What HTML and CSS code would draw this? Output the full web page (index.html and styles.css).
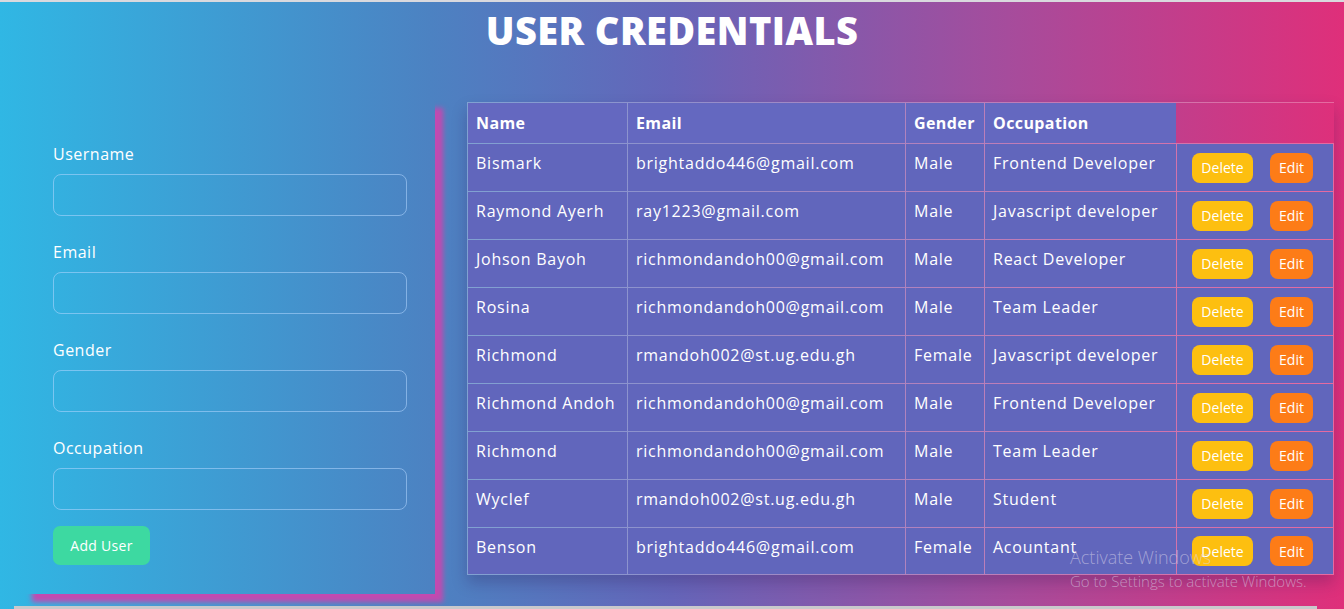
FILE: index.html
```html
<!DOCTYPE html>
<html lang="en">
<head>
  <meta charset="UTF-8">
  <meta name="viewport" content="width=device-width, initial-scale=1.0">
  <title>User Credentials</title>
  <link rel="stylesheet" href="styles.css">
</head>
<body>
  <div class="page">
    <h1 class="title">USER CREDENTIALS</h1>

    <div class="content">
      <!-- add user form -->
      <form class="user-form">
        <div class="form-group">
          <label>Username</label>
          <input type="text">
        </div>
        <div class="form-group">
          <label>Email</label>
          <input type="text">
        </div>
        <div class="form-group">
          <label>Gender</label>
          <input type="text">
        </div>
        <div class="form-group">
          <label>Occupation</label>
          <input type="text">
        </div>
        <button type="button" class="add-button">Add User</button>
      </form>

      <!-- users table -->
      <table class="user-table">
        <thead>
          <tr>
            <th class="col-name">Name</th>
            <th class="col-email">Email</th>
            <th class="col-gender">Gender</th>
            <th class="col-occupation">Occupation</th>
            <th class="col-actions"></th>
          </tr>
        </thead>
        <tbody>
          <tr>
            <td>Bismark</td><td>brightaddo446@gmail.com</td><td>Male</td><td>Frontend Developer</td>
            <td class="actions"><button class="delete-button">Delete</button><button class="edit-button">Edit</button></td>
          </tr>
          <tr>
            <td>Raymond Ayerh</td><td>ray1223@gmail.com</td><td>Male</td><td>Javascript developer</td>
            <td class="actions"><button class="delete-button">Delete</button><button class="edit-button">Edit</button></td>
          </tr>
          <tr>
            <td>Johson Bayoh</td><td>richmondandoh00@gmail.com</td><td>Male</td><td>React Developer</td>
            <td class="actions"><button class="delete-button">Delete</button><button class="edit-button">Edit</button></td>
          </tr>
          <tr>
            <td>Rosina</td><td>richmondandoh00@gmail.com</td><td>Male</td><td>Team Leader</td>
            <td class="actions"><button class="delete-button">Delete</button><button class="edit-button">Edit</button></td>
          </tr>
          <tr>
            <td>Richmond</td><td>rmandoh002@st.ug.edu.gh</td><td>Female</td><td>Javascript developer</td>
            <td class="actions"><button class="delete-button">Delete</button><button class="edit-button">Edit</button></td>
          </tr>
          <tr>
            <td>Richmond Andoh</td><td>richmondandoh00@gmail.com</td><td>Male</td><td>Frontend Developer</td>
            <td class="actions"><button class="delete-button">Delete</button><button class="edit-button">Edit</button></td>
          </tr>
          <tr>
            <td>Richmond</td><td>richmondandoh00@gmail.com</td><td>Male</td><td>Team Leader</td>
            <td class="actions"><button class="delete-button">Delete</button><button class="edit-button">Edit</button></td>
          </tr>
          <tr>
            <td>Wyclef</td><td>rmandoh002@st.ug.edu.gh</td><td>Male</td><td>Student</td>
            <td class="actions"><button class="delete-button">Delete</button><button class="edit-button">Edit</button></td>
          </tr>
          <tr>
            <td>Benson</td><td>brightaddo446@gmail.com</td><td>Female</td><td>Acountant</td>
            <td class="actions"><button class="delete-button">Delete</button><button class="edit-button">Edit</button></td>
          </tr>
        </tbody>
      </table>
    </div>

    <div class="scrollbar"></div>

    <!-- windows watermark over the page -->
    <div class="watermark">
      <p class="watermark-title">Activate Windows</p>
      <p class="watermark-text">Go to Settings to activate Windows.</p>
    </div>
  </div>
</body>
</html>
```

FILE: styles.css
```css
* {
  box-sizing: border-box;
  margin: 0;
  padding: 0;
  font-family: 'Open Sans', sans-serif;
}

body {
  height: 609px;
  overflow: hidden;
}

.page {
  position: relative;
  height: 609px;
  border-top: 2px solid #d9d9de;
  background: linear-gradient(to right, #30b7e4 0%, #4c82c2 32%, #6565b9 50%, #a64c9c 75%, #df2f7a 100%);
  color: white;
}

.title {
  text-align: center;
  font-size: 38px;
  font-weight: 800;
  line-height: 56px;
  height: 98px;
  letter-spacing: 0.4px;
}

.content {
  display: flex;
  align-items: flex-start;
}

.user-form {
  width: 411px;
  height: 494px;
  margin-left: 24px;
  padding: 42px 28px 0 29px;
  box-shadow: 8px 8px 5px #c24ab0;
}

.form-group {
  margin-bottom: 24px;
}

.form-group label {
  display: block;
  font-size: 16px;
  line-height: 24px;
  letter-spacing: 0.5px;
  margin-bottom: 8px;
}

.form-group input {
  display: block;
  width: 100%;
  height: 42px;
  background: transparent;
  border: 1px solid rgba(180, 215, 255, 0.55);
  border-radius: 8px;
}

.add-button {
  margin-top: -8px;
  background-color: #3dd9a1;
  color: white;
  border: none;
  border-radius: 7px;
  font-size: 14px;
  letter-spacing: 0.3px;
  width: 97px;
  height: 39px;
}

.user-table {
  margin-left: 32px;
  margin-top: 2px;
  border-collapse: separate;
  border-spacing: 0;
  width: 867px;
  box-shadow: 0 8px 14px rgba(40, 20, 80, 0.25);
  font-size: 16px;
  letter-spacing: 0.75px;
}

.user-table th,
.user-table td {
  text-align: left;
  padding: 7px 8px 9px;
  line-height: 24px;
  border-top: 1px solid rgba(255, 255, 255, 0.28);
  border-left: 1px solid rgba(255, 255, 255, 0.28);
  background-clip: padding-box;
  white-space: nowrap;
}

.user-table th {
  background-color: #6468c0;
  font-weight: 700;
  letter-spacing: 0.4px;
  height: 41px;
  padding: 8px;
}

.user-table td {
  background-color: #6166bc;
  vertical-align: top;
  height: 48px;
}

.user-table th.col-actions {
  background: none;
  border-left: none;
}

.user-table td.actions {
  vertical-align: middle;
  padding: 0 0 0 15px;
  letter-spacing: 0;
  border-right: 1px solid rgba(255, 255, 255, 0.28);
}

.user-table tbody tr:last-child td {
  border-bottom: 1px solid rgba(255, 255, 255, 0.28);
}

.col-name { width: 160px; }
.col-email { width: 278px; }
.col-gender { width: 79px; }
.col-occupation { width: 192px; }
.col-actions { width: 158px; }

.delete-button,
.edit-button {
  color: white;
  border: none;
  border-radius: 8px;
  font-size: 14px;
  height: 30px;
  padding: 0;
}

.delete-button {
  background-color: #fdbf10;
  width: 61px;
  margin-right: 17px;
}

.edit-button {
  background-color: #fd7c17;
  width: 43px;
}

.scrollbar {
  position: absolute;
  left: 14px;
  bottom: 0;
  width: 1303px;
  height: 3px;
  background-color: #c9c9cc;
}

.watermark {
  position: absolute;
  left: 1070px;
  top: 543px;
  color: rgba(220, 215, 235, 0.55);
}

.watermark-title {
  font-size: 18px;
  font-weight: 300;
  line-height: 24px;
}

.watermark-text {
  font-size: 15px;
  font-weight: 300;
  line-height: 20px;
  margin-top: 2px;
}
```
